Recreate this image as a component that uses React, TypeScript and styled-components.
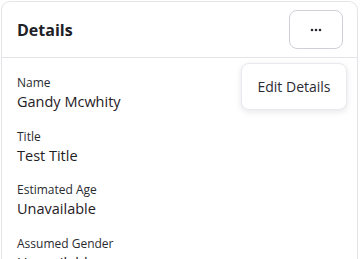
import styled, { createGlobalStyle } from "styled-components";

const GlobalStyle = createGlobalStyle`
  html, body {
    margin: 0;
    padding: 0;
    background: #ffffff;
    font-family: "Open Sans", "Noto Sans", sans-serif;
    color: #1f2024;
  }
`;

const Page = styled.div`
  width: 360px;
  height: 259px;
  overflow: hidden;
  padding: 1px 1px 0 1px;
  box-sizing: border-box;
`;

const Card = styled.div`
  position: relative;
  border: 1px solid #e3e4e8;
  border-bottom: none;
  border-radius: 9px 9px 0 0;
  height: 300px;
  width: 357px;
  box-sizing: border-box;
`;

const Header = styled.div`
  display: flex;
  align-items: center;
  justify-content: space-between;
  height: 56px;
  padding: 0 14px 0 15px;
  border-bottom: 1px solid #e3e4e8;
  box-sizing: border-box;
`;

const Title = styled.h2`
  margin: 0;
  font-size: 16px;
  font-weight: 700;
  color: #202126;
`;

const MoreButton = styled.button`
  width: 54px;
  height: 39px;
  border: 1px solid #cfd0d8;
  border-radius: 8px;
  background: #fff;
  display: flex;
  align-items: center;
  justify-content: center;
  padding: 0;
  cursor: pointer;
`;

const Menu = styled.div`
  position: absolute;
  top: 61px;
  right: 10px;
  width: 106px;
  height: 47px;
  box-sizing: border-box;
  background: #fff;
  border: 1px solid #e8e9ee;
  border-radius: 8px;
  box-shadow: 0 2px 6px rgba(20, 20, 40, 0.1);
  display: flex;
  align-items: center;
  justify-content: center;
`;

const MenuItem = styled.span`
  font-size: 14px;
  color: #2a2b30;
`;

const Body = styled.div`
  display: flex;
  flex-direction: column;
  gap: 15.5px;
  padding: 17px 15px;
`;

const Field = styled.div`
  display: flex;
  flex-direction: column;
`;

const Label = styled.span`
  font-size: 12px;
  line-height: 16px;
  color: #2a2b30;
`;

const Value = styled.span`
  font-size: 14.5px;
  line-height: 22px;
  color: #1f2024;
`;

const fields = [
  { label: "Name", value: "Gandy Mcwhity" },
  { label: "Title", value: "Test Title" },
  { label: "Estimated Age", value: "Unavailable" },
  { label: "Assumed Gender", value: "Unavailable" },
];

export default function App() {
  return (
    <Page>
      <GlobalStyle />
      <Card>
        <Header>
          <Title>Details</Title>
          <MoreButton aria-label="More">
            <svg width="12" height="4" viewBox="0 0 12 4">
              <circle cx="2" cy="2" r="1.3" fill="#2a2b30" />
              <circle cx="6" cy="2" r="1.3" fill="#2a2b30" />
              <circle cx="10" cy="2" r="1.3" fill="#2a2b30" />
            </svg>
          </MoreButton>
        </Header>
        <Body>
          {fields.map(f => (
            <Field key={f.label}>
              <Label>{f.label}</Label>
              <Value>{f.value}</Value>
            </Field>
          ))}
        </Body>
        <Menu>
          <MenuItem>Edit Details</MenuItem>
        </Menu>
      </Card>
    </Page>
  );
}
